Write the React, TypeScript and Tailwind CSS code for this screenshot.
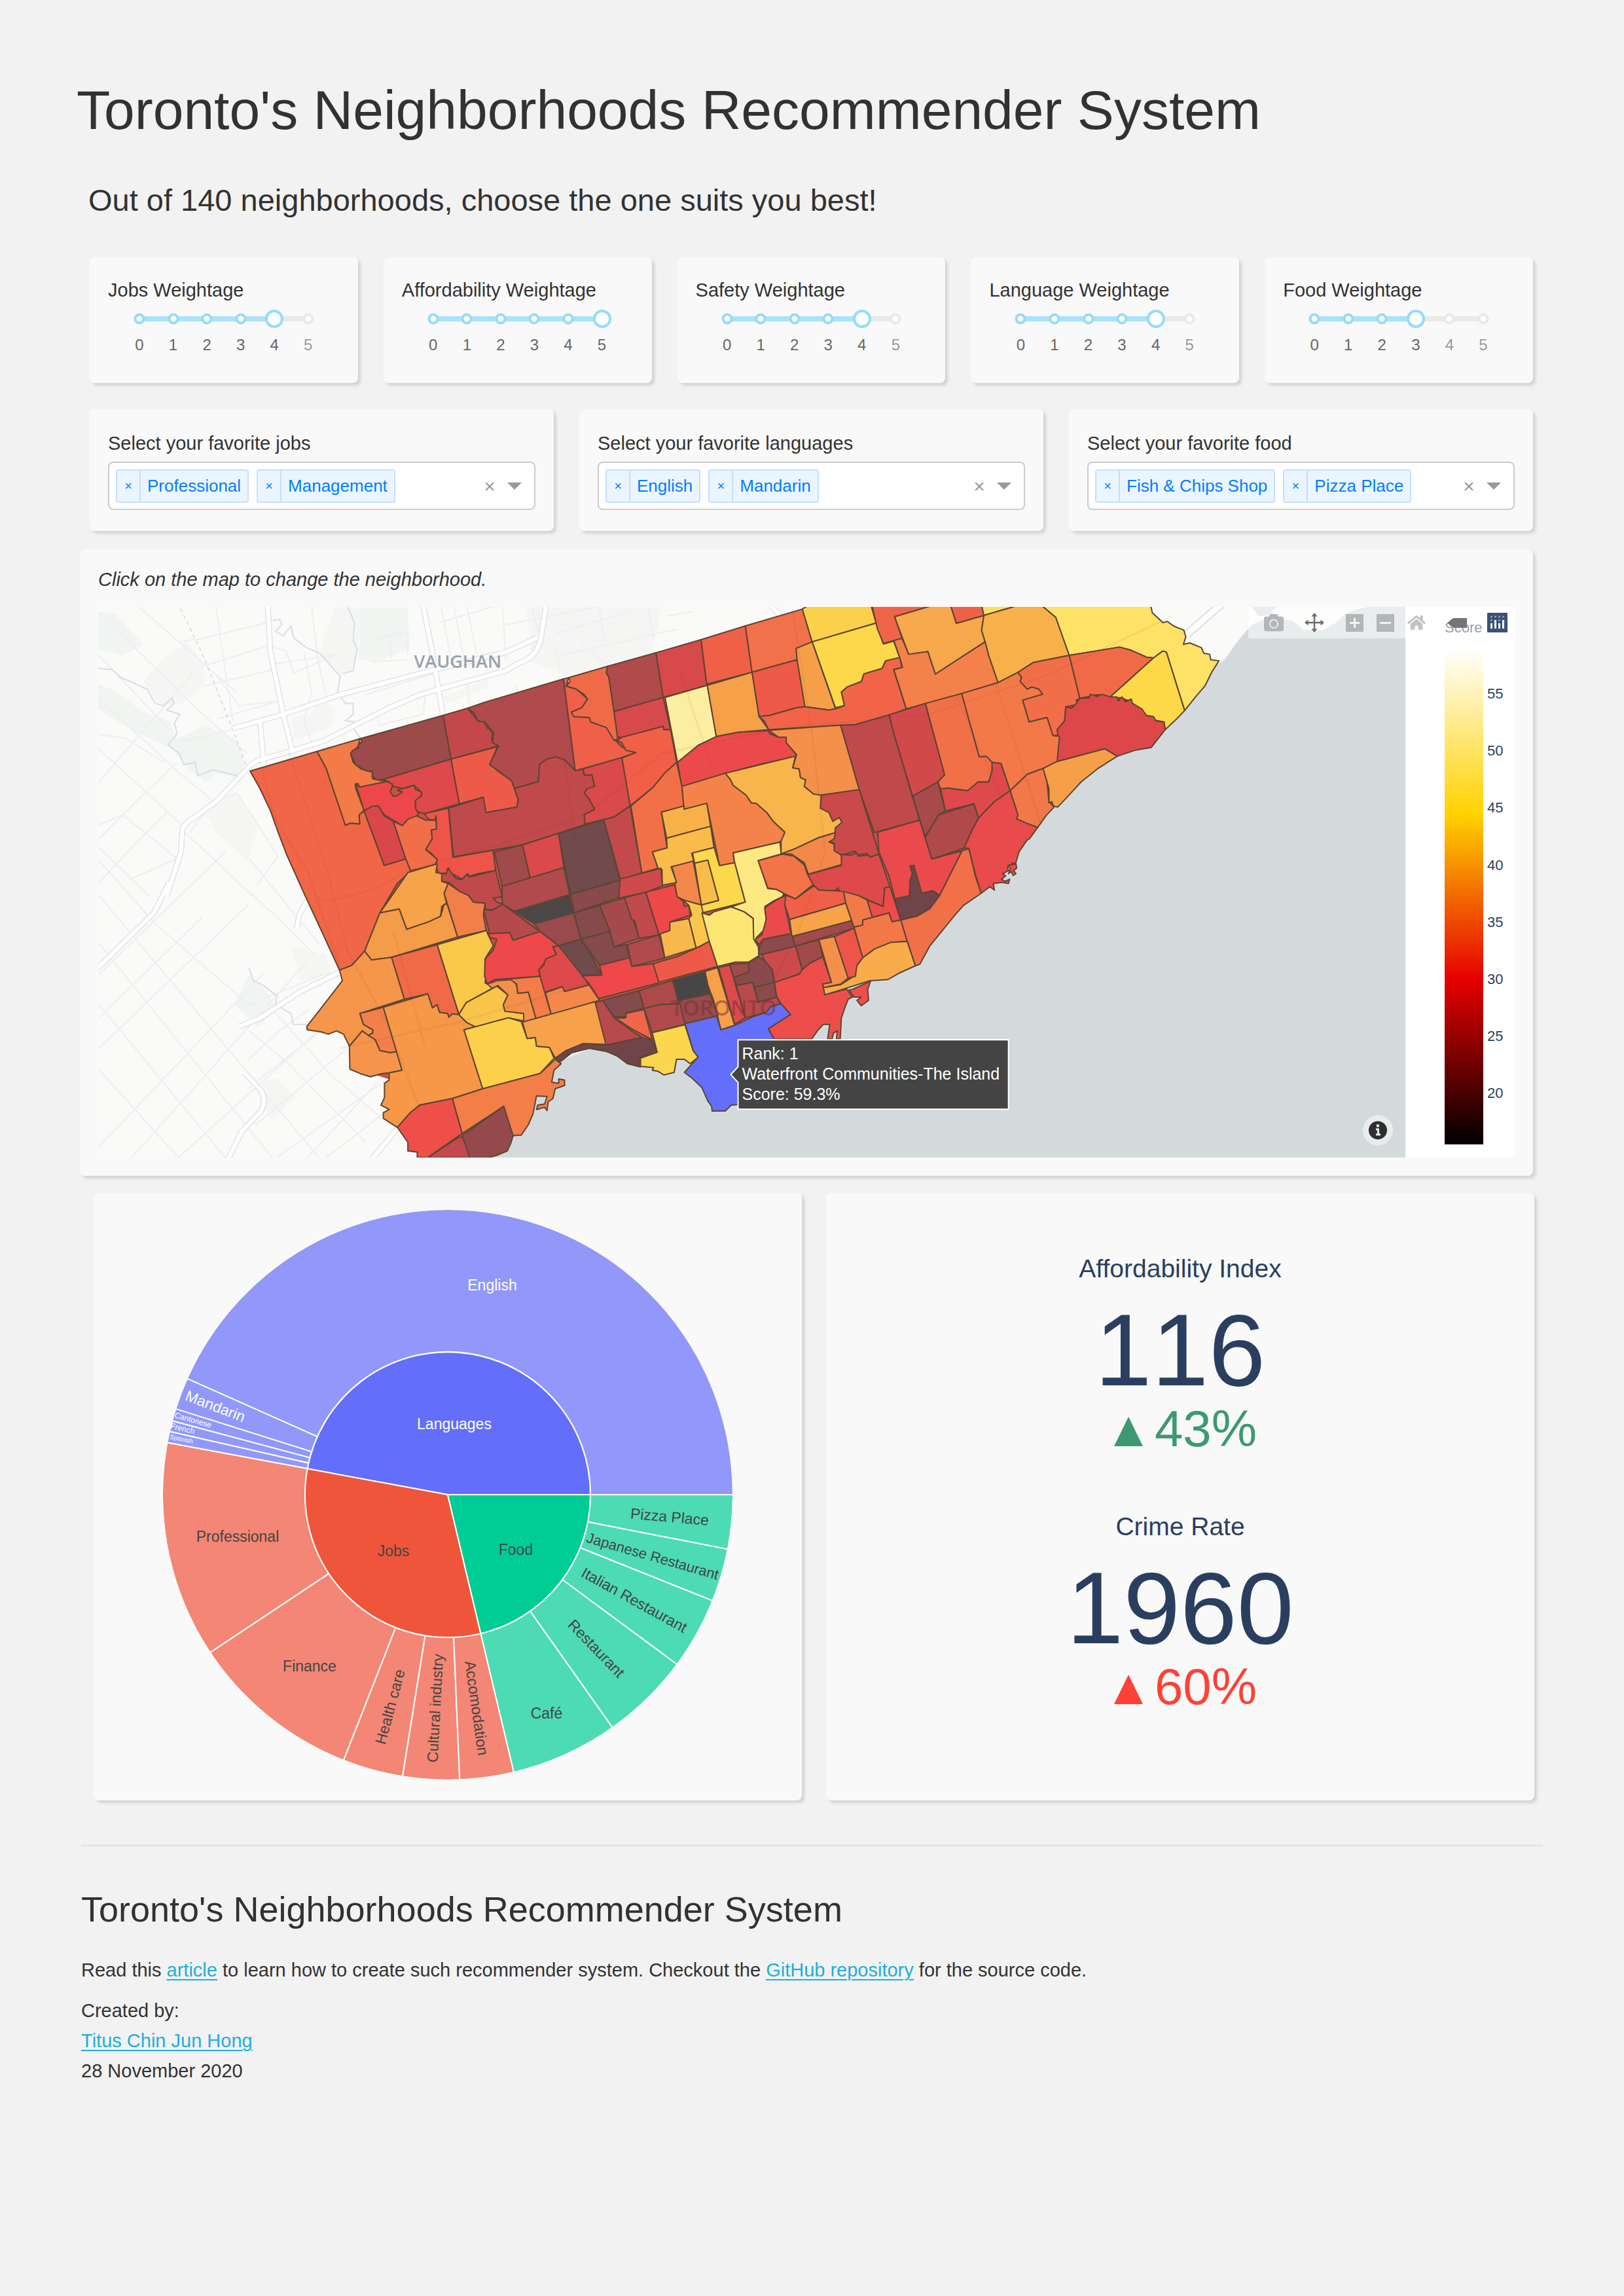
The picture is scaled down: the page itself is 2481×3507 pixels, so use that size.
import React, { useState } from "react";
import { FaCamera, FaHome } from "react-icons/fa";

const CARD = "rounded-lg bg-[#f9f9f9] shadow-[4px_4px_4px_#d3d3d3]";

/* ---------- weight sliders ---------- */

function WeightSlider({ name, initial }: { name: string; initial: number }) {
  const [value, setValue] = useState(initial);
  const id = "w-" + name.toLowerCase();
  return (
    <div className={CARD + " px-7 pt-8 pb-11"}>
      <label htmlFor={id} className="block text-[29px] leading-9">
        {name} Weightage
      </label>
      <div className="relative mx-12 mt-3 h-7">
        <div className="absolute inset-x-0 top-[10px] h-2 rounded bg-[#e9e9e9]" />
        <div className="absolute left-0 top-[10px] h-2 bg-[#abe2fb]" style={{ width: `${value * 20}%` }} />
        {[0, 1, 2, 3, 4, 5].map((n) => (
          <span
            key={n}
            className={
              "absolute top-[14px] size-[17px] -translate-x-1/2 -translate-y-1/2 rounded-full border-4 bg-white " +
              (n <= value ? "border-[#96dbfa]" : "border-[#e9e9e9]")
            }
            style={{ left: `${n * 20}%` }}
          />
        ))}
        <span
          className="absolute top-[14px] size-7 -translate-x-1/2 -translate-y-1/2 rounded-full border-4 border-[#96dbfa] bg-white"
          style={{ left: `${value * 20}%` }}
        />
        <input
          id={id}
          type="range"
          min={0}
          max={5}
          value={value}
          onChange={(e) => setValue(Number(e.target.value))}
          className="absolute inset-0 w-full cursor-pointer opacity-0"
        />
      </div>
      <div className="mx-9 mt-3 flex justify-between text-2xl leading-7">
        {[0, 1, 2, 3, 4, 5].map((n) => (
          <span key={n} className={"w-6 text-center " + (n <= value ? "text-[#666]" : "text-[#999]")}>
            {n}
          </span>
        ))}
      </div>
    </div>
  );
}

/* ---------- multi selects ---------- */

function MultiSelect({ label, initial }: { label: string; initial: string[] }) {
  const [items, setItems] = useState(initial);
  const id = label.replace(/ /g, "-").toLowerCase();
  return (
    <div className={CARD + " px-7 pt-[34px] pb-8"}>
      <label htmlFor={id} className="block text-[29px] leading-9">
        {label}
      </label>
      <div className="mt-[10px] flex h-[74px] items-center gap-3 rounded-lg border-2 border-[#ccc] bg-white pl-[10px] pr-4">
        {items.map((item) => (
          <span
            key={item}
            className="flex h-[51px] items-center rounded border-2 border-[#c2e0ff] bg-[#ebf5ff] text-[26px] text-[#007eff]"
          >
            <button
              type="button"
              aria-label={"Remove " + item}
              onClick={() => setItems(items.filter((x) => x !== item))}
              className="h-full w-9 border-r-2 border-[#c2e0ff] text-xl"
            >
              ×
            </button>
            <span className="whitespace-nowrap px-[10px]">{item}</span>
          </span>
        ))}
        <input id={id} type="text" className="min-w-0 flex-1 bg-transparent text-[26px] outline-none" />
        <button type="button" aria-label="Clear all" onClick={() => setItems([])} className="w-6 text-[30px] text-[#999]">
          ×
        </button>
        <button type="button" aria-label="Open" className="flex w-7 justify-center">
          <svg width="22" height="11" viewBox="0 0 22 11" fill="#999">
            <path d="M0 0h22L11 11z" />
          </svg>
        </button>
      </div>
    </div>
  );
}

/* ---------- map ---------- */

type Shape = [string, string];

const NORTH_WEST: Shape[] = [
  ["#f16646", "612,830 870,740 905,815 980,1078 1000,1068 1035,1072 1033,1030 1052,1012 1130,1262 1215,1232 1232,1287 1180,1345 1113,1480 1054,1655 1004,1720 957,1742 887,1560 824,1400 752,1210 720,1110 690,1010 650,910"],
  ["#f37b47", "870,740 1035,682 1030,715 1000,750 1010,790 1040,820 1085,835 1085,865 1110,872 1140,878 1035,903 1028,887 1018,890 1020,910 1052,1010 1033,1030 1035,1072 1000,1068 980,1078 905,815"],
  ["#9c4a4a", "1035,682 1357,575 1388,775 1125,868 1100,870 1083,855 1085,832 1065,830 1045,820 1020,802 1015,790 1000,750 1008,735 1030,725 1030,708 1045,695"],
  ["#c4484a", "1357,575 1452,542 1475,575 1490,600 1515,605 1530,635 1548,650 1545,690 1570,715 1388,775"],
  ["#de494b", "1125,868 1388,775 1420,980 1285,1025 1253,1015 1250,990 1250,960 1272,945 1268,920 1245,895 1200,910 1165,900 1145,878"],
  ["#ee4749", "1020,890 1035,903 1140,878 1162,890 1160,905 1153,925 1165,945 1180,943 1200,925 1180,918 1200,910 1220,905 1245,895 1250,915 1272,925 1275,940 1250,965 1250,1000 1262,1025 1250,1045 1222,1052 1200,1080 1130,1030 1105,988 1052,1010"],
  ["#d9474b", "1052,1012 1085,990 1108,990 1130,1035 1165,1060 1213,1232 1130,1262"],
  ["#f16f48", "1165,1060 1200,1080 1222,1050 1255,1035 1290,1055 1330,1055 1332,1095 1312,1100 1315,1140 1290,1190 1335,1235 1328,1258 1232,1287 1213,1232"],
  ["#ee5a48", "1388,775 1567,718 1552,760 1537,800 1575,835 1622,875 1632,910 1647,960 1642,995 1522,1020 1512,950 1420,980"],
  ["#ee5548", "1285,1025 1378,1000 1395,1225 1550,1193 1560,1285 1490,1300 1460,1312 1452,1300 1430,1325 1400,1305 1382,1300 1380,1275 1375,1298 1340,1298 1328,1260 1335,1235 1310,1205 1290,1190 1315,1140 1312,1100 1332,1095 1330,1035 1325,1055 1300,1050"],
];

const NORTH: Shape[] = [
  ["#b04a4c", "-65,542 0,515 305,408 350,828 310,780 275,765 240,775 212,800 208,878 115,910 105,875 60,835 20,800 35,760 55,715 30,700 35,655 0,605 -27,600 -40,565"],
  ["#c0494b", "-139,1000 -5,950 5,1020 125,995 130,960 115,910 208,878 212,800 240,775 275,765 310,780 350,828 380,820 385,848 415,848 425,900 385,930 405,960 425,1005 385,1030 388,1075 285,1115 145,1168 33,1192 -120,1223"],
  ["#f05f49", "305,408 325,402 315,440 355,455 398,500 375,540 335,560 345,580 405,585 410,605 470,630 510,695 530,720 585,745 530,768 350,828"],
  ["#f16a48", "325,402 475,350 470,380 480,400 515,680 500,690 470,630 410,605 405,585 345,580 335,560 375,540 398,500 385,480 355,455 315,440 330,420"],
  ["#b04a4b", "475,350 662,288 690,493 500,557 480,400 470,380"],
  ["#d8494b", "662,288 836,228 858,437 690,493"],
  ["#f06048", "836,228 1007,165 1033,377 858,432"],
  ["#f1714a", "1007,165 1227,88 1265,238 1203,268 1207,320 1033,377"],
  ["#fbd04b", "1227,88 1250,70 1492,70 1512,152 1265,238"],
  ["#fcd84a", "1265,238 1512,152 1540,248 1580,235 1603,310 1549,325 1535,360 1465,385 1455,420 1400,445 1378,468 1390,530 1355,540"],
  ["#d8494b", "500,557 690,493 700,545 718,640 692,640 690,625 530,675 513,675"],
  ["#fceea0", "697,493 860,437 895,672 825,712 745,790"],
  ["#f6a047", "860,437 1033,377 1060,580 1097,640 980,652 895,672"],
  ["#ef5a48", "1033,377 1207,320 1237,535 1205,540 1100,575 1060,580"],
  ["#f5a049", "1203,268 1265,238 1355,545 1330,550 1237,535 1207,320"],
  ["#f16448", "1060,580 1100,575 1205,540 1237,535 1330,550 1355,545 1390,530 1378,468 1400,445 1455,420 1465,385 1535,360 1549,325 1603,310 1612,355 1580,365 1628,545 1568,572 1430,618 1375,620 1097,640 1080,600"],
  ["#ec4a4a", "745,790 825,712 895,672 980,652 1097,645 1100,658 1135,675 1165,672 1165,700 1205,755 1200,762 1060,800 930,840 762,900"],
  ["#f15f48", "530,675 690,625 692,640 718,640 742,790 695,840 650,905 562,990 530,770 585,745 545,735 530,700 513,690"],
  ["#da494b", "380,820 530,768 562,990 500,1040 388,1073 385,1030 425,1005 405,960 385,930 395,912 425,900 415,848 385,848"],
  ["#f27048", "742,790 762,900 770,990 683,1018 705,1182 648,1200 670,1275 607,1297 565,990 650,905 695,840"],
  ["#c24a4c", "460,1053 500,1040 562,990 607,1297 525,1328"],
  ["#f58248", "762,900 930,840 950,870 960,895 1010,940 1030,975 1050,978 1090,1020 1115,1060 1160,1110 1155,1140 1140,1155 960,1205 965,1250 907,1263 858,978 770,1005"],
  ["#f8b54b", "930,840 1200,762 1190,815 1215,820 1220,860 1240,870 1235,900 1270,935 1300,925 1300,960 1297,1000 1330,1020 1345,1060 1370,1042 1380,1065 1355,1090 1355,1112 1290,1135 1200,1185 1145,1210 1145,1150 1160,1110 1115,1060 1090,1020 1050,978 1030,975 1010,940 960,895 950,870"],
  ["#f49049", "1097,643 1375,620 1447,915 1300,940 1270,935 1235,900 1240,870 1220,860 1215,820 1190,815 1205,755 1165,700 1165,675 1135,675"],
  ["#c0494b", "1375,620 1430,618 1562,572 1582,660 1652,945 1680,1055 1505,1112 1447,915"],
  ["#ca494b", "1300,940 1447,915 1525,1215 1480,1225 1478,1208 1440,1215 1432,1197 1378,1215 1350,1195 1350,1160 1330,1155 1350,1140 1355,1090 1380,1065 1370,1042 1345,1060 1330,1020 1297,1000"],
  ["#f8b049", "683,1018 770,990 770,1005 858,978 873,1083 703,1137"],
  ["#f9bb4a", "703,1137 873,1083 886,1180 800,1207 808,1245 720,1268 742,1340 686,1353 685,1280 670,1275 648,1200 705,1182"],
  ["#f4884a", "1145,1210 1200,1185 1290,1135 1355,1112 1350,1140 1330,1155 1350,1165 1350,1195 1378,1215 1380,1258 1250,1302 1235,1250 1185,1210"],
];

const EAST: Shape[] = [
  ["#f06448", "-24,70 240,70 73,123 105,222 70,232 25,245 0,180"],
  ["#f6a84a", "73,123 240,70 312,70 337,153 455,117 445,185 460,238 247,386 215,283 133,295"],
  ["#f06048", "312,70 445,70 455,117 337,153"],
  ["#fde060", "445,70 605,70 455,117"],
  ["#f8b04a", "455,117 605,70 700,70 762,125 790,210 820,300 665,333 600,378 515,425 475,300 460,238 445,185"],
  ["#fde266", "700,70 1168,70 1175,105 1220,150 1240,145 1265,165 1310,185 1318,215 1308,250 1335,243 1385,265 1395,290 1420,295 1425,320 1460,325 1430,375 1400,440 1360,490 1313,553 1235,285 1220,280 1180,312 1150,308 1080,275 1035,262 820,300 790,210 762,125"],
  ["#f4804a", "70,232 105,222 133,295 215,283 247,386 460,238 475,300 515,425 360,475 123,545 70,365 107,355 95,310"],
  ["#f16e49", "600,378 665,333 820,300 865,497 850,505 855,525 830,530 805,535 800,600 768,640 780,665 750,668 725,585 648,605 620,505 705,478 690,455 660,445 640,455 610,420 615,400"],
  ["#f16a48", "820,300 1035,262 1080,275 1150,308 1180,312 995,490 940,480 865,497"],
  ["#fdd94a", "1180,312 1220,280 1235,285 1313,553 1280,590 1230,640 1225,605 1180,595 1150,575 1080,510 1040,495 995,490"],
  ["#de4749", "865,497 905,495 910,478 940,488 960,478 995,490 1022,490 1030,508 1045,490 1060,512 1085,500 1090,520 1130,545 1150,575 1180,580 1190,600 1225,605 1230,640 1170,722 1100,735 1025,762 972,728 765,787 775,700 768,640 800,600 805,535 830,542 850,520"],
  ["#d2494c", "50,572 205,520 287,847 260,880 150,945 70,660"],
  ["#f17048", "205,520 360,475 435,765 465,762 490,785 490,830 475,880 430,880 385,920 300,908 270,912 258,880 287,847"],
  ["#f37a48", "360,475 515,425 600,378 615,400 610,420 640,455 660,445 690,455 705,478 620,505 648,605 725,585 750,668 778,670 768,785 708,818 640,845 567,920 528,795 490,790 465,762 435,765"],
  ["#de494b", "490,790 528,795 567,920 500,970 432,1045 412,980 290,1013 270,912 300,908 385,920 430,880 475,880 490,830"],
  ["#a84a4c", "150,945 258,880 290,1013 262,1030 203,1130"],
  ["#b04a4a", "262,1030 412,980 432,1045 400,1110 370,1183 232,1233 203,1135"],
  ["#f17848", "567,920 640,845 708,818 725,880 733,970 755,995 720,1035 685,1088 640,1070 595,1050 600,1030"],
  ["#f5a048", "708,818 765,787 972,728 1025,762 940,820 870,880 810,950 770,995 752,990 745,970 733,975 733,910"],
  ["#e94a4b", "567,920 600,1030 595,1050 640,1070 685,1088 650,1140 640,1145 605,1200 590,1255 575,1252 578,1268 555,1270 560,1285 535,1300 548,1310 530,1325 545,1335 565,1325 560,1345 530,1340 495,1345 500,1375 480,1360 443,1390 420,1310 390,1183 370,1183 400,1110 432,1045 500,970"],
  ["#ee4a4b", "558,1262 592,1255 595,1275 582,1285 592,1300 580,1308 572,1290 560,1300 568,1275"],
];

const SOUTH_WEST: Shape[] = [
  ["#f6a349", "560,280 680,95 805,55 800,95 825,100 825,135 852,145 835,190 845,235 825,250 820,295 770,320 675,355 643,262"],
  ["#f59c48", "560,280 643,262 675,355 770,320 820,295 835,240 848,240 893,390 610,483 525,495 495,455"],
  ["#f37f48", "852,145 900,180 940,200 960,230 1010,235 1003,290 1015,360 893,390 835,190"],
  ["#c0494c", "825,100 845,100 850,75 885,120 910,128 930,105 945,115 1055,85 1083,205 1045,212 1060,230 1088,240 1040,265 1010,265 1010,235 960,230 940,200 900,180 855,140 825,135"],
  ["#b44a4c", "1005,265 1040,268 1085,240 1245,365 1130,405 1115,370 1030,375"],
  ["#a04a4c", "1050,0 1170,-32 1203,120 1083,158"],
  ["#da494b", "1170,-32 1325,-85 1347,72 1203,120"],
  ["#b04a4c", "1083,158 1347,72 1372,195 1135,272 1085,240 1083,210"],
  ["#4c4848", "1135,272 1370,200 1388,280 1220,330"],
  ["#984a4c", "1220,330 1388,280 1420,400 1380,412 1325,430 1245,365"],
  ["#fac84a", "805,425 1015,360 1045,430 1010,490 1015,560 1010,600 1050,620 930,690 898,745"],
  ["#f06a48", "610,483 805,425 898,745 870,742 855,758 850,740 815,735 805,700 785,715 765,650 665,675"],
  ["#ee484a", "1025,375 1115,370 1130,405 1245,365 1325,430 1300,435 1315,470 1270,500 1240,540 1245,570 1120,580 1050,585 1020,605 1008,570 1010,490 1045,450 1060,400 1030,392"],
  ["#de494b", "1325,430 1380,490 1455,610 1350,640 1340,618 1260,645 1240,540 1260,520 1270,490 1315,470 1300,435"],
  ["#f5964a", "495,455 525,495 610,483 665,675 475,740 490,790 530,815 530,830 510,840 485,820 430,890 405,835 375,820 340,835 310,825 250,815 248,800 400,590 388,542 440,520"],
  ["#f38048", "475,740 575,712 635,915 605,920 560,910 540,860 510,840 530,830 530,815 490,790"],
  ["#f5944a", "485,820 510,840 540,860 560,910 605,920 633,915 655,1000 600,1012 570,1015 520,1030 475,1015 432,995 430,890"],
  ["#f69848", "575,712 765,650 785,715 805,700 815,735 850,740 855,758 870,742 898,745 930,780 970,800 920,815 1000,1085 870,1130 730,1160 690,1195 635,1262 575,1220 575,1195 600,1180 565,1160 580,1125 580,1060 600,1045 600,1012 655,1000"],
  ["#f9c44a", "898,745 930,690 1060,615 1108,655 1088,700 1095,730 1175,740 1180,775 1110,760 970,802 930,780"],
  ["#fcd04a", "920,815 1110,760 1165,778 1190,855 1225,850 1230,890 1285,895 1305,945 1245,1015 1000,1085"],
  ["#f4904a", "1020,605 1060,590 1130,585 1145,610 1150,648 1195,642 1228,765 1175,780 1175,740 1095,730 1088,700 1108,655 1065,612 1040,625"],
  ["#f37c48", "1115,582 1245,570 1293,745 1228,765 1195,642 1150,648 1145,605"],
  ["#f4884a", "1268,645 1340,618 1350,640 1455,610 1500,680 1293,745"],
  ["#f7a24a", "1170,780 1485,685 1530,882 1430,878 1370,905 1310,945 1285,895 1230,890 1225,850 1190,855"],
  ["#f37e48", "870,1130 1000,1085 1245,1015 1310,950 1335,970 1305,1000 1295,1055 1325,1060 1325,1040 1350,1045 1350,1070 1310,1085 1300,1130 1280,1145 1275,1185 1265,1170 1230,1180 1235,1160 1265,1155 1275,1120 1230,1118 1215,1200 1195,1250 1165,1297 1125,1300 1090,1165 912,1290"],
  ["#ee5049", "730,1160 870,1130 912,1290 765,1400 720,1400 720,1375 680,1370 680,1330 660,1300 635,1262 690,1195"],
  ["#c24a4c", "900,1305 920,1310 945,1400 765,1400"],
  ["#944a4c", "912,1300 1090,1165 1130,1300 1120,1335 1105,1370 1060,1390 1025,1400 945,1400 925,1340"],
];

const SOUTH: Shape[] = [
  ["#ea4a4b", "986,-90 1130,-145 1148,-65 1171,33 1275,-5 1198,200 1175,178 1137,190 1115,100 1108,62 1097,65 1105,100 1097,130 1095,205 1045,215 1025,110 990,0"],
  ["#704448", "1045,215 1095,200 1097,130 1105,100 1097,65 1110,62 1137,190 1175,178 1198,200 1165,260 1120,295 1065,310"],
  ["#f17048", "1275,-5 1298,-15 1320,110 1340,190 1280,245 1250,290 1165,430 1130,515 1115,522 1087,410 1065,312 1120,295 1165,260 1198,200"],
  ["#de494b", "750,103 862,62 862,12 895,15 915,5 920,20 955,15 960,25 990,10 1028,160 1010,165 1005,250 920,200 855,180 850,165 840,178 785,175 765,150 750,130"],
  ["#f06048", "665,195 705,215 768,155 785,175 840,178 870,182 877,235 685,310 668,240"],
  ["#f27448", "577,40 660,10 700,20 735,60 745,100 765,150 705,215 665,190 640,172 610,165"],
  ["#fde882", "492,5 652,-45 656,10 577,40 610,168 640,172 665,190 660,205 630,225 600,250 605,310 595,360 570,395 572,430 560,420 560,305 530,275 485,252 533,230 497,50"],
  ["#fcd84c", "353,5 427,-20 445,63 497,50 533,230 385,280 383,243 442,222 405,38 360,52"],
  ["#f9bb4a", "360,52 405,38 442,222 383,243"],
  ["#f4884a", "282,68 355,42 383,243 330,225 300,205 292,145 298,140"],
  ["#f9c64c", "320,220 383,243 410,410 375,435 365,440 340,305 350,290 340,245"],
  ["#fde674", "385,280 410,290 425,275 485,252 530,275 560,305 562,400 578,435 580,475 545,505 500,505 438,525 410,410"],
  ["#ea4a4a", "672,200 668,240 690,375 595,400 580,425 568,400 590,380 605,310 600,260 612,245 640,220"],
  ["#f6a349", "685,310 877,235 897,315 693,388"],
  ["#a04a4c", "693,388 897,315 905,350 705,432"],
  ["#8c4a4c", "595,400 690,375 705,432 590,470 580,470 582,430"],
  ["#f27a48", "870,182 920,200 950,220 968,300 935,312 935,335 905,345 877,235"],
  ["#ee4a4a", "950,220 1005,250 1010,165 1028,160 1065,312 1035,320 1025,280 968,300"],
  ["#f27848", "905,345 935,335 935,312 1025,280 1035,320 1065,312 1087,410 1030,415 975,445 935,485"],
  ["#f8ac4a", "1087,410 1115,522 1060,555 1020,585 960,590 805,655 800,622 860,608 905,570 915,520 935,485 975,445 1030,415"],
  ["#ee5549", "838,388 905,350 935,485 915,520 910,570 885,578"],
  ["#f4904a", "785,402 838,388 885,578 860,605 800,622 798,605 828,598"],
  ["#a04a4b", "705,432 785,402 798,480 755,510 728,540"],
  ["#cc494c", "590,470 705,432 728,540 718,560 633,598 625,540 600,500"],
  ["#ee4e4b", "728,540 755,510 798,480 828,598 798,605 805,655 880,628 900,665 885,675 875,710 862,760 858,858 845,858 848,820 835,830 830,858 815,858 822,790 800,790 780,820 760,858 632,858 612,810 688,745 655,695 640,660 633,598 718,560"],
  ["#ee4e4b", "900,630 962,592 952,630 955,680 930,705 915,680 930,665 905,665 888,632"],
  ["#884a4c", "545,505 580,480 600,500 625,540 633,598 565,620 558,598 503,612 493,575 545,550"],
  ["#a04a4c", "480,515 545,510 545,550 493,575"],
  ["#8c4a4c", "565,620 633,598 640,665 578,690"],
  ["#b84a4c", "503,612 558,598 578,690 640,665 655,695 620,710 605,735 533,760"],
  ["#de494c", "442,530 480,518 533,760 497,790"],
  ["#f6a04a", "395,548 438,530 497,795 450,815 425,680 405,610"],
  ["#464646", "285,588 395,548 412,650 303,682"],
  ["#984a4c", "303,682 412,650 440,750 327,787"],
  ["#ee5a48", "218,512 300,480 375,435 410,410 438,525 235,598"],
  ["#f8b84c", "242,375 275,360 275,322 340,305 365,440 258,485"],
  ["#ee4849", "193,185 292,150 300,205 320,225 325,250 340,245 345,290 275,322 275,360 238,378"],
  ["#d0494b", "103,125 245,75 250,155 193,185 100,212"],
  ["#704a4c", "-106,-85 49,-147 105,130 -65,195"],
  ["#884a4c", "-65,195 105,130 100,210 -52,278"],
  ["#a44a4c", "35,245 120,210 150,310 170,395 85,435"],
  ["#c0494c", "120,210 193,185 238,380 170,397 155,315 145,310"],
  ["#844a4c", "-53,280 35,245 71,365 -29,400"],
  ["#b04a4c", "130,425 238,380 258,487 145,525"],
  ["#844a4c", "-29,400 70,365 85,435 128,425 137,485 35,520"],
  ["#704a4c", "-105,430 -29,400 5,470 43,565 -25,565"],
  ["#ee484a", "35,520 137,485 145,525 218,512 238,600 32,672 0,605 -25,568 43,565"],
  ["#844a4c", "45,680 170,635 187,715 125,740 128,755 85,755"],
  ["#ac4a4c", "170,635 285,588 303,682 310,695 240,700 187,718"],
  ["#b04a4c", "187,718 240,700 310,695 327,790 215,828"],
  ["#f1654a", "90,762 125,760 125,740 187,722 215,860 150,815"],
  ["#b84a4c", "20,690 45,680 85,760 150,825 180,850 57,885"],
  ["#704448", "57,885 180,850 215,860 232,920 175,940 175,985 130,970 95,935 60,915 0,900 -60,920 -100,962 -117,945 -80,910 -20,878"],
  ["#fcd64c", "215,828 327,792 355,910 372,940 345,970 325,950 298,950 290,1010 255,1022 235,1005 215,1000 220,988 175,982 175,945 232,918"],
  ["#636efa", "327,787 435,752 450,815 497,795 560,755 605,735 620,710 655,695 688,745 612,810 632,858 640,1000 540,1155 485,1160 465,1187 420,1187 418,1165 405,1140 385,1080 350,1035 325,1010 372,940 355,910"],
];

const SHEETS: { at: string; shapes: Shape[] }[] = [
  { at: "translate(140 900) scale(.3954 .33333)", shapes: NORTH_WEST },
  { at: "translate(740 900) scale(.3954 .33333)", shapes: NORTH },
  { at: "translate(1340 900) scale(.35714 .33333)", shapes: EAST },
  { at: "translate(380 1300) scale(.35714 .33333)", shapes: SOUTH_WEST },
  { at: "translate(900 1300) scale(.44643 .33333)", shapes: SOUTH },
];

const NW = SHEETS[0].at;
const SW = SHEETS[3].at;

/* city outline that closes the hairline gaps between neighbouring shapes */
const CITY =
  "396,1182 549,1132 740,1078 928,1023 1071,982 1227,933 1745,930 1775,965 1800,985 1835,1015 1800,1082 1770,1110 1752,1136 1704,1150 1645,1190 1602,1230 1576,1262 1548,1300 1510,1330 1490,1355 1452,1392 1390,1470 1350,1490 1257,1513 1265,1540 1230,1550 1180,1583 1140,1600 1060,1600 1030,1605 978,1612 940,1592 890,1590 848,1608 790,1700 717,1760 650,1760 618,1720 602,1650 560,1636 540,1618 538,1597 530,1497 528,1484 502,1425 478,1367 450,1303 426,1237";

const PARKS: Shape[] = [
  [NW, "20,430 90,460 200,560 300,600 330,680 440,620 560,690 590,800 560,860 480,840 440,880 380,830 300,720 150,640 20,540"],
  [NW, "940,80 1000,80 1110,120 1100,210 1030,230 1010,370 960,390 880,290 900,210"],
  [NW, "200,420 260,330 370,240 430,330 440,440 350,520 260,520"],
  [NW, "20,100 90,110 200,250 120,300 20,270"],
  [NW, "770,590 850,560 880,500 940,540 930,620 860,660 780,690"],
  [NW, "1360,490 1530,410 1530,450 1370,520"],
  [NW, "1040,80 1220,80 1230,270 1100,330 1030,320"],
  [NW, "430,1000 560,930 640,1100 600,1240 480,1110"],
  [NW, "1680,80 2200,80 2160,330 1850,400 1700,330"],
  [SW, "0,560 80,640 120,720 40,800 -60,700"],
  [SW, "180,430 330,470 350,560 220,590"],
  [SW, "20,1060 120,1040 200,1120 100,1230 60,1160"],
];

const STREETS: Shape[] = [
  [NW, "M185 80L560 470M20 95L420 560L600 750M20 290L300 640M20 490L350 850L480 980M20 720L260 980L350 1080M480 80L510 320L545 600M20 890L240 590L400 370M20 1150L180 960L330 790M360 1110L620 1400M20 1170L220 1400M20 1350L180 1150L290 1020"],
  [NW, "M400 230L680 150M430 350L510 320L700 250M440 440L700 365M480 390L570 530L720 510M340 240L400 225M490 590L720 510M330 700L540 640M820 280L850 470L820 600L860 740M850 80L870 300L905 480M940 300L700 340M1080 330L1220 320M1090 230L1220 190L1220 300M1150 200L1160 330M1060 480L1330 380M1340 150L1600 60M1350 80L1390 330M1400 80L1440 330M1450 80L1490 310M1100 550L1110 620L1280 570L1290 480M1450 420L1460 540"],
  [NW, "M1587 80L1600 320M1700 80L1740 260M1790 260L1810 370M1600 160L2280 0M1790 200L2080 100M1960 80L1980 240M2150 80L2170 230M1890 250L2000 350M1640 440L1650 520M2220 120L2320 100M1810 300L2260 180M690 260L750 280L780 380L940 300M20 660L130 680L280 790M20 1080L120 1030L330 1230L140 1330M380 1110L470 970L560 930L720 1220L640 1350"],
  [SW, "M0 30L300 420M0 180L150 330L280 470M0 700L320 560M-640 900L0 240M0 820L160 960L500 1330M100 720L350 1020L600 1250M0 950L130 820L260 720M0 1080L380 760M30 1250L420 900M120 1400L580 1050M-640 200L300 1400M-640 420L100 1400M-640 700L-100 1400M-640 1000L-300 1400M-640 1350L60 560M-500 1400L250 500M-300 1400L420 700M-640 560L-100 0M-640 760L-200 300M250 1400L600 1000M330 1400L600 1180M-640 40L-400 330L0 700"],
];

const HIGHWAYS: Shape[] = [
  [NW, "M290 1400L345 1200L350 1100Q355 1070 400 1040L480 970L600 820Q620 790 660 775L780 735L900 690L1000 630L1150 540L1270 480L1340 455L1600 370L1650 335Q1720 310 1735 220L1755 70"],
  [NW, "M1280 70L1310 250L1340 455L1360 600"],
  [NW, "M545 635L740 570L960 480L1310 370L1600 285L1720 220"],
  [NW, "M680 70L690 280L740 570L775 735M650 600L665 800M2620 70L2660 120"],
  [NW, "M300 1340L240 1480L60 1690L-40 1800"],
  [SW, "M-40 800L50 760L220 640L400 545M525 1410L640 1260M-20 1010L50 1090Q80 1140 50 1190L-30 1280L-90 1410M205 350L215 290L250 220"],
];

function MapView() {
  return (
    <svg viewBox="150 926 1996 841" className="block min-w-0 flex-1" role="img" aria-label="Neighborhood scores">
      <rect x="150" y="926" width="1996" height="841" fill="#fafaf8" />
      {PARKS.map(([t, p], i) => (
        <polygon key={i} transform={t} points={p} fill={i % 3 ? "#f5f6f4" : "#f1f5f2"} />
      ))}
      <g fill="none">
        {STREETS.map(([t, d], i) => (
          <path key={i} transform={t} d={d} stroke="#eeeeef" strokeWidth="2" vectorEffect="non-scaling-stroke" />
        ))}
        <path
          transform={NW}
          d="M20 360L80 365L110 400L160 425L215 455L245 520L275 530L310 497L318 520L290 550L340 570L320 610L330 660L295 710L340 750L355 800L400 790L410 850L470 825L560 850L600 835M700 140L725 135L735 160L710 190L740 210L770 165L780 220L830 265L880 290L960 395L950 470L980 520L1010 520L1010 570L980 600L1020 605L1015 640L1040 685M990 80L1015 150L1010 230L1025 270L1010 370L970 385"
          stroke="#d9dee2"
          strokeWidth="2"
          vectorEffect="non-scaling-stroke"
        />
        <path
          transform={SW}
          d="M0 530L20 590L60 610L120 660L115 700L180 740L190 790L250 790"
          stroke="#d9dee2"
          strokeWidth="2"
          vectorEffect="non-scaling-stroke"
        />
        <path transform={NW} d="M343 85L430 300L545 640L595 800" stroke="#e2dcdc" strokeWidth="2" strokeDasharray="6 5" vectorEffect="non-scaling-stroke" />
        {HIGHWAYS.map(([t, d], i) => (
          <path key={i} transform={t} d={d} stroke="#e2e2e4" strokeWidth="9" vectorEffect="non-scaling-stroke" />
        ))}
        {HIGHWAYS.map(([t, d], i) => (
          <path key={i} transform={t} d={d} stroke="#ffffff" strokeWidth="6" vectorEffect="non-scaling-stroke" />
        ))}
      </g>
      <polygon
        points="1869,1008 1885,985 1900,966 1912,953 1930,945 1950,942 1975,948 1990,961 2020,962 2040,950 2055,936 2075,929 2090,926 2146,926 2146,1767 746,1767 780,1650 1000,1560 1200,1500 1450,1340 1700,1100"
        fill="#d4dadc"
      />
      <path d="M1912 926H1952L1940 934L1950 938L1922 940Z" fill="#d4dadc" />
      <path d="M1812 968L1865 922" stroke="#dfdfe2" strokeWidth="13" />
      <path d="M1812 968L1865 922" stroke="#fff" strokeWidth="9" />
      <text x="699" y="1019" textAnchor="middle" fontSize="27" fontWeight="600" fill="#98a1ac" fontFamily="Open Sans, sans-serif">
        VAUGHAN
      </text>
      <polygon points={CITY} fill="#c4524a" />
      {SHEETS.map(({ at, shapes }) => (
        <g key={at} transform={at} stroke="#5c4533" strokeWidth="2" strokeLinejoin="round">
          {shapes.map(([fill, points], i) => (
            <polygon key={i} points={points} fill={fill} vectorEffect="non-scaling-stroke" />
          ))}
        </g>
      ))}
      <g fill="none" stroke="#7a3b2a" strokeOpacity=".07" strokeWidth="3">
        <path d="M400 1172L420 1250L470 1330L520 1480M440 1145L500 1330L530 1450L590 1560L640 1690M480 1375Q560 1370 620 1330L760 1290L900 1240L1010 1150L1200 1110L1420 1090L1600 1030L1790 940M1210 930L1240 1120L1260 1300L1220 1420L1180 1500M860 1150L880 1290L930 1390M1520 1040L1590 1260M1460 1060L1530 1220M1040 1030L1090 1180M520 1600L700 1560L900 1500M600 1420L650 1600" />
      </g>
      <text x="1105" y="1550" textAnchor="middle" fontSize="33" fontWeight="600" fill="#7c2f38" fillOpacity=".55" fontFamily="Open Sans, sans-serif">
        TORONTO
      </text>
      <path d="M1127 1587H1540V1693H1127V1652L1116 1640L1127 1628Z" fill="#444" stroke="#fff" strokeWidth="2" />
      <g fill="#fff" fontSize="25" fontFamily="Liberation Sans, Arial, sans-serif">
        <text x="1133" y="1617">Rank: 1</text>
        <text x="1133" y="1648">Waterfront Communities-The Island</text>
        <text x="1133" y="1679">Score: 59.3%</text>
      </g>
      <circle cx="2104" cy="1725" r="23" fill="#e9eced" />
      <circle cx="2104" cy="1725" r="14" fill="#2f2f2f" />
      <path d="M2102 1716h4v4h-4zM2101 1722h5v8h2v3h-7v-3h2v-5h-2z" fill="#e9eced" />
    </svg>
  );
}

const TOOL = "flex h-12 w-[47px] items-center justify-center text-[#b3b7b9]";

function ModeBar() {
  return (
    <div className="absolute right-0 top-0 flex gap-[15px] bg-white/50 pl-[15px] pr-[3px]">
      <button type="button" aria-label="Download plot" className={TOOL}>
        <FaCamera size={30} />
      </button>
      <button type="button" aria-label="Pan" className={TOOL}>
        <svg width="30" height="30" viewBox="0 0 30 30" fill="#6b6b6b">
          <path d="M15 0l4.500 5.500h-3.300v8.300h8.300v-3.300L30 15l-5.500 4.500v-3.300h-8.300v8.300h3.300L15 30l-4.500-5.500h3.300v-8.300H5.500v3.300L0 15l5.500-4.500v3.300h8.300V5.500h-3.300z" />
        </svg>
      </button>
      <div className="flex">
        <button type="button" aria-label="Zoom in" className={TOOL}>
          <svg width="27" height="27" viewBox="0 0 27 27">
            <path d="M0 0h27v27H0z" fill="currentColor" />
            <path d="M13.500 6v15M6 13.500h15" stroke="#f2f4f4" strokeWidth="3" />
          </svg>
        </button>
        <button type="button" aria-label="Zoom out" className={TOOL}>
          <svg width="27" height="27" viewBox="0 0 27 27">
            <path d="M0 0h27v27H0z" fill="currentColor" />
            <path d="M5 13.500h17" stroke="#f2f4f4" strokeWidth="3" />
          </svg>
        </button>
        <button type="button" aria-label="Reset view" className={TOOL}>
          <FaHome size={28} color="#c2c2c2" />
        </button>
      </div>
      <button type="button" aria-label="Toggle hover" className={TOOL}>
        <svg width="30" height="15" viewBox="0 0 30 15" fill="#757575">
          <path d="M0 7.500L7 1.500Q9 0 11 0H30V15H11Q9 15 7 13.500z" />
        </svg>
      </button>
      <a href="https://plotly.com/" aria-label="Produced with Plotly" className={TOOL}>
        <svg width="31" height="30" viewBox="0 0 31 30">
          <rect width="31" height="30" rx="1" fill="#3f4f75" />
          <g fill="#6fb3c4">
            <circle cx="6.500" cy="6" r="1.500" />
            <circle cx="12.500" cy="6" r="1.500" />
            <circle cx="18.500" cy="6" r="1.500" />
            <circle cx="24.500" cy="6" r="1.500" />
            <circle cx="6.500" cy="11.500" r="1.500" />
            <circle cx="18.500" cy="11.500" r="1.500" />
          </g>
          <path d="M5 16h3v8H5zM11 11h3v13h-3zM17 16h3v8h-3zM23 11h3v13h-3z" fill="#fff" />
        </svg>
      </a>
    </div>
  );
}

/* ---------- sunburst ---------- */

const CX = 684;
const CY = 2282;

function arc(r0: number, r1: number, a0: number, a1: number) {
  const pt = (r: number, a: number) => {
    const t = (a * Math.PI) / 180;
    return `${(CX + r * Math.cos(t)).toFixed(1)} ${(CY - r * Math.sin(t)).toFixed(1)}`;
  };
  const large = a1 - a0 > 180 ? 1 : 0;
  return `M${pt(r0, a0)}L${pt(r1, a0)}A${r1} ${r1} 0 ${large} 0 ${pt(r1, a1)}L${pt(r0, a1)}A${r0} ${r0} 0 ${large} 1 ${pt(r0, a0)}Z`;
}

const LEAVES: [number, number, string][] = [
  [0, 156, "#9198f9"],
  [156, 162.5, "#9198f9"],
  [162.5, 165, "#9198f9"],
  [165, 167.2, "#9198f9"],
  [167.2, 169.5, "#9198f9"],
  [169.5, 213.6, "#f38674"],
  [213.6, 248.6, "#f38674"],
  [248.6, 260.9, "#f38674"],
  [260.9, 272.4, "#f38674"],
  [272.4, 283.4, "#f38674"],
  [283.4, 305.3, "#4cdbb5"],
  [305.3, 323.5, "#4cdbb5"],
  [323.5, 338.2, "#4cdbb5"],
  [338.2, 349, "#4cdbb5"],
  [349, 360, "#4cdbb5"],
];

const LABELS: [string, number, number, number, number, string][] = [
  ["English", 752, 1962, 0, 23, "#fff"],
  ["Languages", 694, 2174, 0, 23, "#fff"],
  ["Mandarin", 329, 2147, 21, 23, "#fff"],
  ["Cantonese", 295, 2168, 16, 12, "#fff"],
  ["French", 279, 2181, 14, 12, "#fff"],
  ["Spanish", 277, 2197, 12, 10, "#fff"],
  ["Professional", 363, 2346, 0, 23, "#444"],
  ["Jobs", 601, 2368, 0, 23, "#444"],
  ["Food", 788, 2366, 0, 23, "#444"],
  ["Finance", 473, 2544, 0, 23, "#444"],
  ["Health care", 596, 2606, -75, 23, "#444"],
  ["Cultural industry", 665, 2608, -87, 23, "#444"],
  ["Accomodation", 728, 2608, 82, 23, "#444"],
  ["Café", 835, 2616, 0, 23, "#444"],
  ["Restaurant", 911, 2517, 46, 23, "#444"],
  ["Italian Restaurant", 969, 2443, 29, 23, "#444"],
  ["Japanese Restaurant", 997, 2376, 16, 22, "#444"],
  ["Pizza Place", 1023, 2316, 5, 23, "#444"],
];

function Sunburst() {
  return (
    <svg viewBox="143 1821 1082 928" className="block w-full" role="img" aria-label="Languages, jobs and food">
      <g stroke="#fff" strokeWidth="2">
        {LEAVES.map(([a, b, c]) => (
          <path key={a} d={arc(218, 436, a, b)} fill={c} />
        ))}
        <path d={arc(0, 218, 0, 169.5)} fill="#636efa" />
        <path d={arc(0, 218, 169.5, 283.4)} fill="#ef553b" />
        <path d={arc(0, 218, 283.4, 360)} fill="#00cc96" />
      </g>
      <circle cx={CX} cy={CY} r="436" fill="none" stroke="#f9f9f9" strokeWidth="2" />
      <g textAnchor="middle" fontFamily="Liberation Sans, Arial, sans-serif">
        {LABELS.map(([t, x, y, rot, size, fill]) => (
          <text key={t} x={x} y={y} dy=".34em" fontSize={size} fill={fill} transform={`rotate(${rot} ${x} ${y})`}>
            {t}
          </text>
        ))}
      </g>
    </svg>
  );
}

function Indicator({ title, value, delta, tone }: { title: string; value: string; delta: string; tone: string }) {
  return (
    <div className="flex flex-col items-center">
      <h3 className="text-[39px] leading-[48px] text-[#2a3f5f]">{title}</h3>
      <p className="mt-5 text-[156px] leading-[160px] text-[#2a3f5f] [font-kerning:none]">{value}</p>
      <p className={"flex items-baseline gap-[18px] pl-4 text-[78px] leading-[80px] " + tone}>
        <svg width="44" height="45" viewBox="0 0 44 45" fill="currentColor" aria-hidden="true">
          <path d="M22 0L44 45H0z" />
        </svg>
        {delta}
      </p>
    </div>
  );
}

const LINK = "text-[#1eaedb] underline decoration-2 underline-offset-4";

export default function App() {
  return (
    <main className="min-h-screen bg-[#f2f2f2] pb-20 pt-[118px] font-['Liberation_Sans',Arial,sans-serif] text-[#323232]">
      <header>
        <h1 className="pl-[117px] text-[84px] leading-[100px]">Toronto's Neighborhoods Recommender System</h1>
        <p className="mt-[58px] pl-[135px] text-[47px] leading-[60px]">
          Out of 140 neighborhoods, choose the one suits you best!
        </p>
      </header>

      <section className="mt-[57px] grid grid-cols-5 gap-[39px] pl-[137px] pr-[139px]">
        <WeightSlider name="Jobs" initial={4} />
        <WeightSlider name="Affordability" initial={5} />
        <WeightSlider name="Safety" initial={4} />
        <WeightSlider name="Language" initial={4} />
        <WeightSlider name="Food" initial={3} />
      </section>

      <section className="mt-10 grid grid-cols-3 gap-[39px] pl-[137px] pr-[139px]">
        <MultiSelect label="Select your favorite jobs" initial={["Professional", "Management"]} />
        <MultiSelect label="Select your favorite languages" initial={["English", "Mandarin"]} />
        <MultiSelect label="Select your favorite food" initial={["Fish & Chips Shop", "Pizza Place"]} />
      </section>

      <section className="mt-7 pl-[122px] pr-[139px]">
        <div className={CARD + " p-7"}>
          <p className="text-[29px] italic leading-9">Click on the map to change the neighborhood.</p>
          <div className="relative mt-6 flex bg-white">
            <MapView />
            <div className="flex w-[167px] flex-col pb-5 pl-[60px] text-[22px] leading-6 text-[#2a3f5f]">
              <span className="mt-5">Score</span>
              <div className="mt-5 flex flex-1 gap-[6px]">
                <div className="w-[59px] bg-[linear-gradient(to_top,rgb(0,0,0),rgb(230,0,0)_33.3%,rgb(255,210,0)_66.6%,rgb(255,255,255))]" />
                <div className="flex flex-col justify-between pb-[66px] pt-[57px]">
                  {[55, 50, 45, 40, 35, 30, 25, 20].map((n) => (
                    <span key={n}>{n}</span>
                  ))}
                </div>
              </div>
            </div>
            <ModeBar />
          </div>
        </div>
      </section>

      <section className="mt-[26px] grid grid-cols-2 gap-[37px] pl-[143px] pr-[137px]">
        <div className={CARD}>
          <Sunburst />
        </div>
        <div className={CARD + " flex flex-col gap-[86px] pt-[92px]"}>
          <Indicator title="Affordability Index" value="116" delta="43%" tone="text-[#3d9970]" />
          <Indicator title="Crime Rate" value="1960" delta="60%" tone="text-[#ff4136]" />
        </div>
      </section>

      <footer className="mx-[124px] mt-[68px] border-t-2 border-[#e1e1e1] pt-16 text-[29px] leading-[46px]">
        <h2 className="text-[54px] leading-[64px]">Toronto's Neighborhoods Recommender System</h2>
        <p className="mt-[38px]">
          Read this{" "}
          <a href="#article" className={LINK}>
            article
          </a>{" "}
          to learn how to create such recommender system. Checkout the{" "}
          <a href="#repository" className={LINK}>
            GitHub repository
          </a>{" "}
          for the source code.
        </p>
        <p className="mt-4">
          Created by:
          <br />
          <a href="#author" className={LINK}>
            Titus Chin Jun Hong
          </a>
          <br />
          28 November 2020
        </p>
      </footer>
    </main>
  );
}
